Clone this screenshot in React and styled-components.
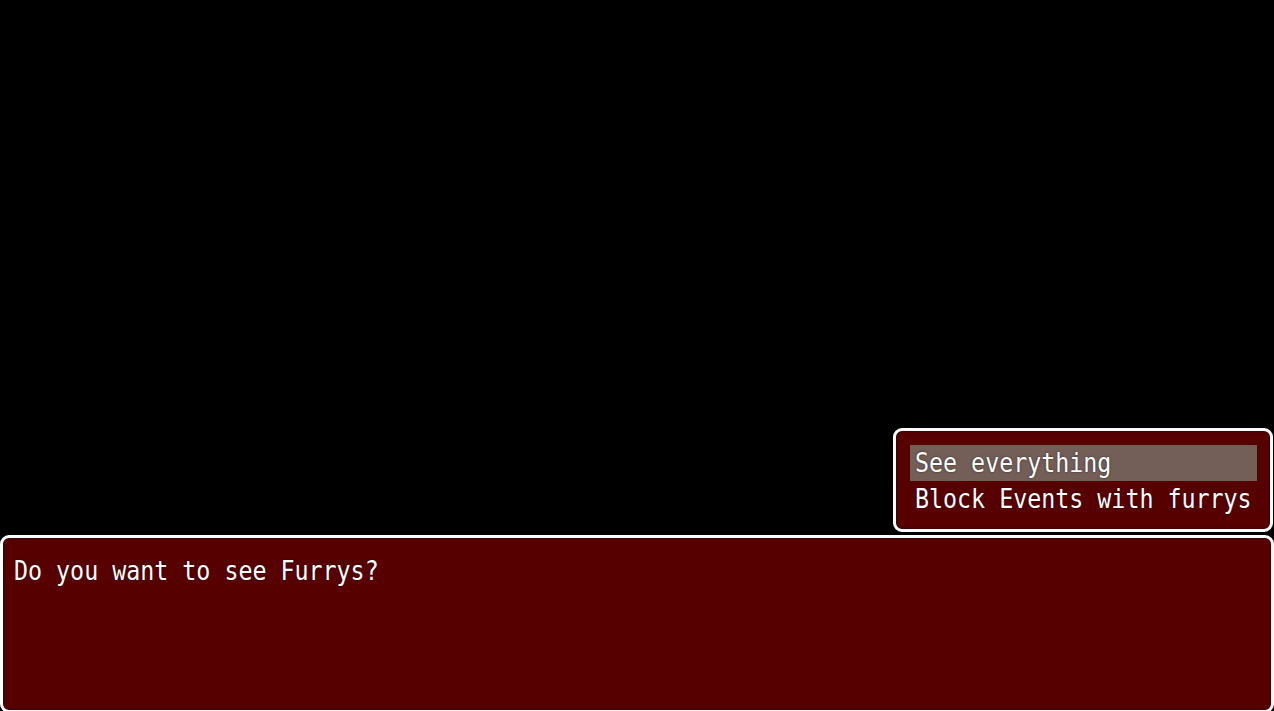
import React, { useState } from "react";
import styled, { createGlobalStyle } from "styled-components";

const GlobalStyle = createGlobalStyle`
  html, body {
    margin: 0;
    padding: 0;
    background: #000;
  }
  body {
    font-family: "DejaVu Sans Mono", "Liberation Mono", monospace;
  }
`;

const choices = ["See everything", "Block Events with furrys"];

const App = () => {
  const [selected, setSelected] = useState(0);

  return (
    <>
      <GlobalStyle />
      <Screen>
        <ChoiceWindow>
          {choices.map((c, i) => (
            <Choice
              key={c}
              $active={i === selected}
              onMouseEnter={() => setSelected(i)}
            >
              <GameText>{c}</GameText>
            </Choice>
          ))}
        </ChoiceWindow>
        <MessageWindow>
          <MessageLine>
            <GameText>Do you want to see Furrys?</GameText>
          </MessageLine>
        </MessageWindow>
      </Screen>
    </>
  );
};

export default App;

const Screen = styled.div`
  width: 1274px;
  height: 711px;
  background: #000;
  display: flex;
  flex-direction: column;
  justify-content: flex-end;
  align-items: flex-end;
  overflow: hidden;
`;

const Window = styled.div`
  box-sizing: border-box;
  background: #570000;
  border: 3px solid #fff;
  border-radius: 9px;
  color: #fff;
  box-shadow: inset 0 0 2px 1px rgba(0, 0, 0, 0.35);
`;

const ChoiceWindow = styled(Window)`
  width: 380px;
  height: 104px;
  margin-right: 1px;
  margin-bottom: 3px;
  padding: 14px 13px 0 14px;
  display: flex;
  flex-direction: column;
`;

const Choice = styled.div`
  height: 36px;
  line-height: 36px;
  padding-left: 5px;
  font-size: 23.3px;
  white-space: nowrap;
  background: ${(p) => (p.$active ? "#735e58" : "transparent")};
  cursor: pointer;
`;

const GameText = styled.span`
  display: inline-block;
  transform: scaleY(1.12);
  text-shadow: 0 0 2px rgba(0, 0, 0, 0.6);
`;

const MessageWindow = styled(Window)`
  width: 1274px;
  height: 178px;
  margin-bottom: -2px;
  padding: 15px 0 0 11px;
`;

const MessageLine = styled.div`
  font-size: 23.3px;
  line-height: 36px;
  white-space: nowrap;
`;
